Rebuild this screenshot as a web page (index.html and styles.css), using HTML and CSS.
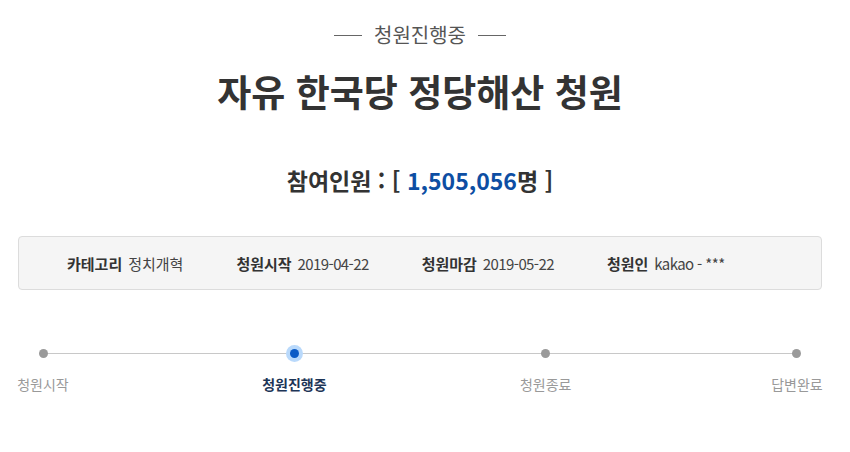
FILE: index.html
```html
<!DOCTYPE html>
<html lang="ko">
<head>
    <meta charset="UTF-8">
    <title>자유 한국당 정당해산 청원</title>
    <link rel="stylesheet" href="styles.css">
</head>
<body>
    <div class="petition">
        <div class="state"><span>청원진행중</span></div>
        <h1 class="title">자유 한국당 정당해산 청원</h1>
        <h2 class="count">참여인원 : [ <span>1,505,056</span>명 ]</h2>

        <ul class="info">
            <li><strong>카테고리</strong>정치개혁</li>
            <li><strong>청원시작</strong><span class="num">2019-04-22</span></li>
            <li><strong>청원마감</strong><span class="num">2019-05-22</span></li>
            <li><strong>청원인</strong><span class="num">kakao - ***</span></li>
        </ul>

        <ol class="steps">
            <li class="step"><span>청원시작</span></li>
            <li class="step active"><span>청원진행중</span></li>
            <li class="step"><span>청원종료</span></li>
            <li class="step"><span>답변완료</span></li>
        </ol>
    </div>
</body>
</html>
```

FILE: styles.css
```css
body {
    margin: 0;
    background: #fff;
    font-family: "Noto Sans CJK KR", "Noto Sans", sans-serif;
    color: #333;
}
.petition {
    width: 804px;
    margin: 0 0 0 18px;
    padding-top: 22px;
}
.state {
    display: flex;
    justify-content: center;
    align-items: center;
    gap: 12px;
    font-size: 20px;
    line-height: 26px;
    color: #555;
}
.state::before,
.state::after {
    content: "";
    width: 28px;
    height: 1px;
    background: #666;
}
.title {
    margin: 21px 0 0;
    text-align: center;
    font-size: 37px;
    line-height: 44px;
    font-weight: bold;
    color: #333;
}
.count {
    margin: 51px 0 0;
    text-align: center;
    font-size: 23px;
    line-height: 32px;
    font-weight: bold;
    color: #333;
}
.count span {
    color: #0d4ea3;
}
.info {
    list-style: none;
    margin: 40px 0 0;
    padding: 0 0 0 48px;
    height: 52px;
    display: flex;
    align-items: center;
    gap: 53px;
    background: #f5f5f5;
    border: 1px solid #dcdcdc;
    border-radius: 4px;
    font-size: 15px;
    color: #444;
}
.info strong {
    margin-right: 6px;
    color: #333;
}
.info .num {
    letter-spacing: -0.6px;
}
.steps {
    list-style: none;
    margin: 51px 0 0;
    padding: 0;
    display: flex;
    justify-content: space-between;
    position: relative;
}
.steps::before {
    content: "";
    position: absolute;
    left: 25px;
    right: 25px;
    top: 12px;
    height: 1px;
    background: #c8c8c8;
}
.step {
    width: 50px;
    display: flex;
    flex-direction: column;
    align-items: center;
    gap: 16px;
    font-size: 14px;
    line-height: 20px;
    color: #999;
    position: relative;
}
.step span {
    white-space: nowrap;
}
.step::before {
    content: "";
    width: 9px;
    height: 9px;
    margin-top: 8px;
    border-radius: 50%;
    background: #9a9a9a;
}
.step.active {
    font-weight: bold;
    color: #1d3557;
}
.step.active::before {
    background: #0c5bc6;
    box-shadow: 0 0 0 4px #b9d9fb;
}
```
